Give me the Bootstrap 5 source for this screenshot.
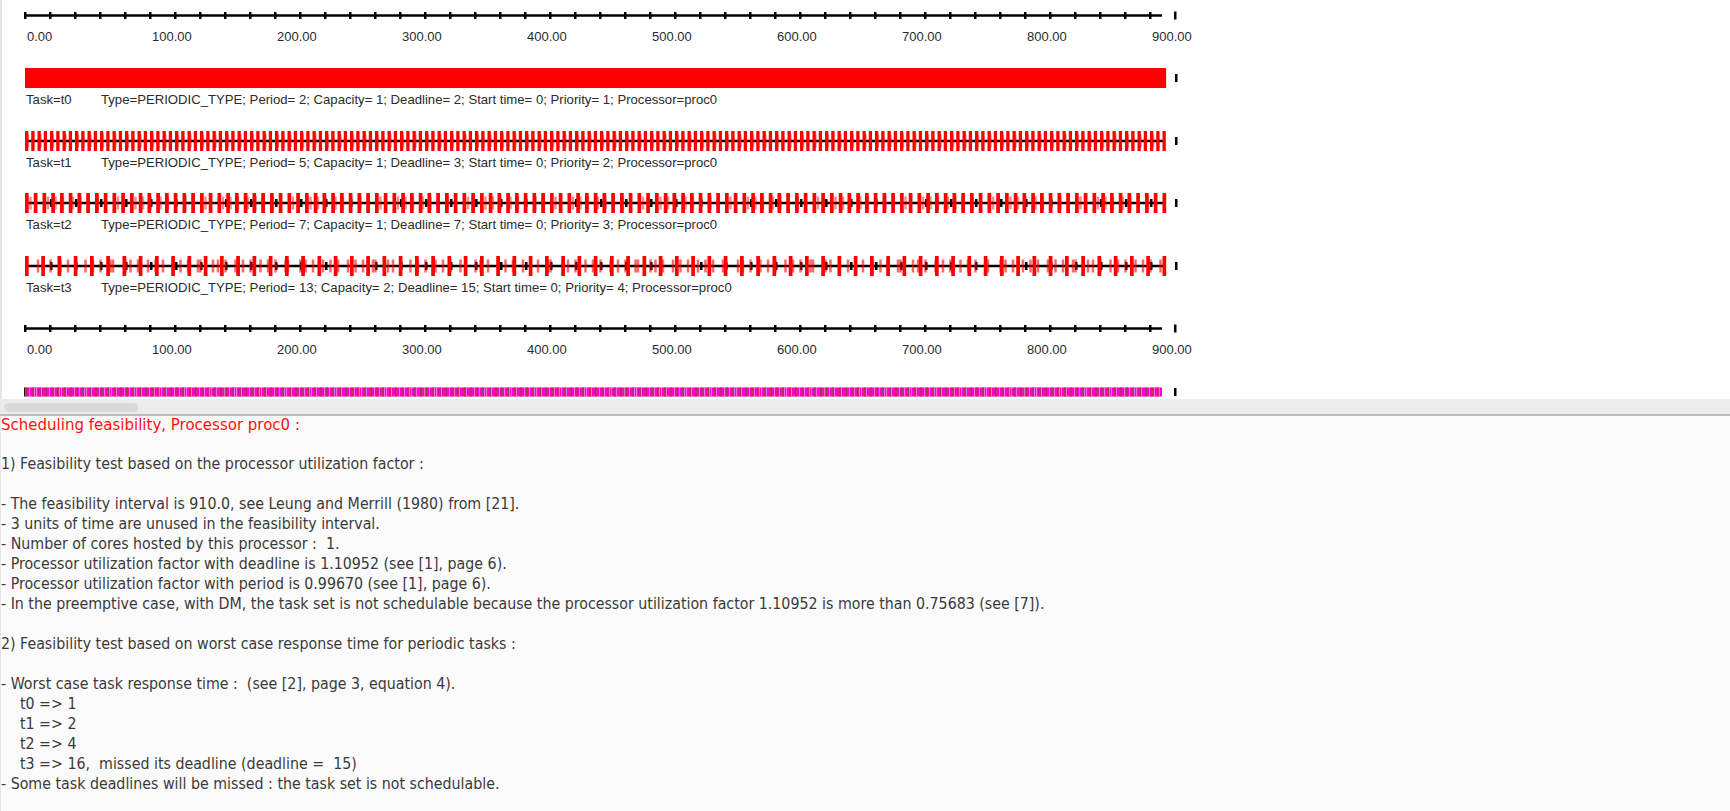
<!DOCTYPE html>
<html lang="en">
<head>
    <meta charset="UTF-8">
    <title>Scheduling simulation</title>
    <link href="https://cdn.jsdelivr.net/npm/bootstrap@5.3.2/dist/css/bootstrap.min.css" rel="stylesheet">
    <style>
        html, body { height: 100%; overflow: hidden; background: #fff; }
        .chart-pane { height: 399px; border-left: 2px solid #e6e6e6; overflow: hidden; background: #fff; font-family: "Liberation Sans", Arial, sans-serif; color: #2b2b2b; }
        .chart-pane svg { display: block; margin-left: -2px; }
        .axis-block { height: 63px; }
        .axis-labels { height: 17px; padding-top: 1px; line-height: 16px; font-size: 13px; padding-left: 25px; }
        .axis-labels span { width: 125px; flex: none; }
        .task-block { height: 62.5px; }
        .task-caption { height: 13px; line-height: 13px; font-size: 13.15px; padding-left: 24px; white-space: pre; }
        .task-caption span:first-child { width: 75px; flex: none; }
        .hscroll { height: 17px; background: #ececec; border-bottom: 2px solid #bdbdbd; padding: 4px 0 0 4px; }
        .hscroll-thumb { width: 134px; height: 9px; border-radius: 5px; background: #d9dbd9; }
        .report { height: 395px; background: #fbfbfb; border-left: 1px solid #e6e6e6; font-family: "DejaVu Sans", Tahoma, sans-serif; font-stretch: condensed; font-size: 15.8px; line-height: 20px; color: #3a3a3a; }
        .report div { white-space: pre; }
        .report .report-title { color: #ff1010; font-size: 16.7px; line-height: 16px; padding-bottom: 2px; }
        .report-indent { padding-left: 19px; }
        .report-gap { height: 20px; }
    </style>
</head>
<body>
    <div class="chart-pane">
        <div class="axis-block">
            <svg class="js-axis" width="1200" height="28"></svg>
            <div class="axis-labels d-flex js-labels"></div>
        </div>
        <div class="task-block">
            <svg class="js-task" data-task="0" width="1200" height="30"></svg>
            <div class="task-caption d-flex"><span>Task=t0</span><span>Type=PERIODIC_TYPE; Period= 2; Capacity= 1; Deadline= 2; Start time= 0; Priority= 1; Processor=proc0</span></div>
        </div>
        <div class="task-block">
            <svg class="js-task" data-task="1" width="1200" height="30"></svg>
            <div class="task-caption d-flex"><span>Task=t1</span><span>Type=PERIODIC_TYPE; Period= 5; Capacity= 1; Deadline= 3; Start time= 0; Priority= 2; Processor=proc0</span></div>
        </div>
        <div class="task-block">
            <svg class="js-task" data-task="2" width="1200" height="30"></svg>
            <div class="task-caption d-flex"><span>Task=t2</span><span>Type=PERIODIC_TYPE; Period= 7; Capacity= 1; Deadline= 7; Start time= 0; Priority= 3; Processor=proc0</span></div>
        </div>
        <div class="task-block">
            <svg class="js-task" data-task="3" width="1200" height="30"></svg>
            <div class="task-caption d-flex"><span>Task=t3</span><span>Type=PERIODIC_TYPE; Period= 13; Capacity= 2; Deadline= 15; Start time= 0; Priority= 4; Processor=proc0</span></div>
        </div>
        <div class="axis-block">
            <svg class="js-axis" width="1200" height="28"></svg>
            <div class="axis-labels d-flex js-labels"></div>
        </div>
        <svg class="js-cpu" width="1200" height="24"></svg>
    </div>

    <div class="hscroll"><div class="hscroll-thumb"></div></div>

    <div class="report">
        <div class="report-title">Scheduling feasibility, Processor proc0 :</div>
        <div class="report-gap"></div>
        <div>1) Feasibility test based on the processor utilization factor :</div>
        <div class="report-gap"></div>
        <div>- The feasibility interval is 910.0, see Leung and Merrill (1980) from [21].</div>
        <div>- 3 units of time are unused in the feasibility interval.</div>
        <div>- Number of cores hosted by this processor :  1.</div>
        <div>- Processor utilization factor with deadline is 1.10952 (see [1], page 6).</div>
        <div>- Processor utilization factor with period is 0.99670 (see [1], page 6).</div>
        <div>- In the preemptive case, with DM, the task set is not schedulable because the processor utilization factor 1.10952 is more than 0.75683 (see [7]).</div>
        <div class="report-gap"></div>
        <div>2) Feasibility test based on worst case response time for periodic tasks :</div>
        <div class="report-gap"></div>
        <div>- Worst case task response time :  (see [2], page 3, equation 4).</div>
        <div class="report-indent">t0 =&gt; 1</div>
        <div class="report-indent">t1 =&gt; 2</div>
        <div class="report-indent">t2 =&gt; 4</div>
        <div class="report-indent">t3 =&gt; 16,  missed its deadline (deadline =  15)</div>
        <div>- Some task deadlines will be missed : the task set is not schedulable.</div>
    </div>

    <script src="https://cdn.jsdelivr.net/npm/bootstrap@5.3.2/dist/js/bootstrap.bundle.min.js"></script>
    <script>
    const X0 = 25, UNIT = 1.25, END = 910;
    const tasks = [
        { period: 2, cap: 1, barW: 3.6 },
        { period: 5, cap: 1, barW: 3.3 },
        { period: 7, cap: 1, barW: 3.7 },
        { period: 13, cap: 2, barW: 3.7 }
    ];

    // fixed priority simulation, one entry per time unit
    const left = [0, 0, 0, 0];
    const schedule = [];
    for (let t = 0; t < END; t++) {
        tasks.forEach((task, i) => { if (t % task.period === 0) left[i] += task.cap; });
        const run = left.findIndex(v => v > 0);
        if (run >= 0) left[run]--;
        schedule.push(run);
    }

    function rect(x, y, w, h, fill, opacity) {
        const op = opacity ? ` fill-opacity="${opacity}"` : "";
        return `<rect x="${x}" y="${y}" width="${w}" height="${h}" fill="${fill}"${op}/>`;
    }

    function axis(offset, cy, tickH, endTickH) {
        let s = rect(X0 + offset, cy - 1.25, 1137, 2.5, "#000");
        for (let x = X0; x <= 1150; x += 25) {
            s += rect(x + offset - 1, cy - tickH / 2, 2.5, tickH, "#000");
        }
        s += rect(1174 + offset, cy - endTickH / 2, 2.5, endTickH, "#000");
        return s;
    }

    document.querySelectorAll(".js-axis").forEach(svg => {
        svg.innerHTML = axis(0, 15.5, 7, 8);
    });

    document.querySelectorAll(".js-labels").forEach(row => {
        let html = "";
        for (let v = 0; v <= 900; v += 100) html += `<span>${v.toFixed(2)}</span>`;
        row.innerHTML = html;
    });

    document.querySelectorAll(".js-task").forEach(svg => {
        const i = Number(svg.dataset.task);
        let s = axis(1, 15, 8, 8);
        schedule.forEach((run, t) => {
            if (run === i) s += rect(X0 + t * UNIT + 0.5, 8.5, 2.5, 13, "#ff0000", i === 3 ? 0.6 : 0.45);
        });
        for (let t = 0; t <= END; t += tasks[i].period) {
            s += rect(X0 + t * UNIT, 5, tasks[i].barW, 20, "#ff0000");
        }
        svg.innerHTML = s;
    });

    // processor row: magenta base, dark stripes every 5 units, pale marks for t2/t3
    const cpu = document.querySelector(".js-cpu");
    let bar = rect(24, 11.5, 1.5, 9, "#111") + rect(X0, 11.5, 1137, 9, "#ff00c4");
    schedule.forEach((run, t) => {
        if (run > 1) bar += rect(Math.round(X0 + t * UNIT), 11.5, 1, 9, "#ff6ad8");
    });
    for (let t = 0; t < END; t += 5) {
        bar += rect(Math.round(X0 + t * UNIT) + 1, 11.5, 2, 9, "#b8306a");
    }
    bar += rect(1174, 12, 2.5, 8, "#000");
    cpu.innerHTML = bar;
    </script>
</body>
</html>
